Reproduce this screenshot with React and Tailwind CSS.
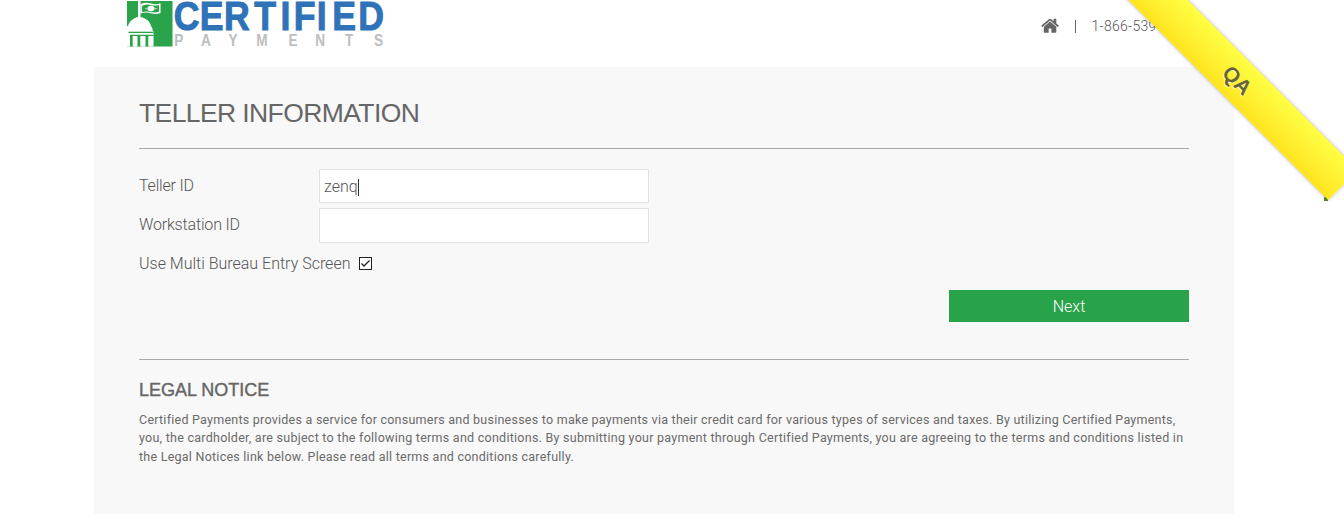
import React from "react";

function Logo() {
  return (
    <svg width="258" height="48" viewBox="0 0 258 48" role="img" aria-label="Certified Payments">
      <rect x="0" y="1" width="45.5" height="45.5" fill="#2aa44a" />
      <path d="M0 26 H1 C2.500 21 6 18.500 11 17 V1 H13.500 V17 C19 18.500 23 21 24 26 Q26 28 25.800 31 H26.500 V46.500 H0 Z" fill="#fff" />
      <rect x="1.500" y="31.700" width="25" height="1.300" fill="#2aa44a" />
      <path d="M3 34.700 H26.500 V36 H21.300 V46.500 H18.500 V36 H13.300 V46.500 H10.500 V36 H5.700 V46.500 H3 Z" fill="#2aa44a" />
      <path d="M13.500 4 Q19 1.800 24 3.500 T33.500 3.200 V13 Q29 14.800 24 13.300 T13.500 13.500 Z" fill="#fff" />
      <path d="M15 6 Q20 3.800 24 5 T32 5 V11.500 Q28 13 24 12 T15 12 Z" fill="#2aa44a" />
      <circle cx="19" cy="8.600" r="0.700" fill="#fff" />
      <circle cx="29" cy="8.600" r="0.700" fill="#fff" />
      <ellipse cx="24" cy="8.500" rx="3.600" ry="2.800" fill="#fff" />
      <g transform="scale(.88 1)" fontFamily="'Liberation Sans', sans-serif" fontWeight="700" fontSize="40.500" fill="#2e72b8" stroke="#2e72b8" strokeWidth="1">
        <text x="53 82.800 110.100 144.500 174.500 189.500 215.500 233.200 262.800" y="29.500">CERTIFIED</text>
      </g>
      <g transform="scale(.85 1)" fontFamily="'Liberation Sans', sans-serif" fontWeight="700" fontSize="16" fill="#bcbec0">
        <text x="55.500 87 119.500 152 190 221.500 256.500 290.500" y="46.500">PAYMENTS</text>
      </g>
    </svg>
  );
}

function HomeIcon() {
  return (
    <svg className="h-[19.5px] w-[19.5px]" viewBox="0 0 1792 1792" fill="#666">
      <path d="M1408 992v480q0 26-19 45t-45 19h-384v-384h-256v384h-384q-26 0-45-19t-19-45v-480q0-1 .5-3t.5-3l575-474 575 474q1 2 1 6zm223-69l-62 74q-8 9-21 11h-3q-13 0-21-7l-692-577-692 577q-12 8-24 7-13-2-21-11l-62-74q-8-10-7-23.500t11-21.500l719-599q32-26 76-26t76 26l244 204v-195q0-14 9-23t23-9h192q14 0 23 9t9 23v408l219 182q10 8 11 21.500t-7 23.500z" />
    </svg>
  );
}

function Ribbon() {
  return (
    <div className="absolute right-0 top-0 h-[220px] w-[240px] overflow-hidden">
      <div className="absolute left-[220px] top-[197px] h-[4px] w-[4px] bg-[#5e8a2e]" />
      <div className="absolute left-[-17.500px] top-[58px] flex h-[42px] w-[300px] rotate-45 items-center justify-center bg-gradient-to-b from-[#ffff44] to-[#ffe41c] pl-[2px] pt-[2px] font-['Liberation_Sans',Arial,sans-serif] text-[21px] font-bold text-[#666633] shadow-[0_0_4px_rgba(0,0,0,0.3)] [text-shadow:0_1px_1px_#fff]">
        QA
      </div>
    </div>
  );
}

function Field({ label, value, active }) {
  return (
    <div className="flex items-center">
      <label className={active ? "w-[180px] text-base tracking-[-0.2px]" : "w-[180px] pb-[2px] text-base tracking-[-0.17px]"}>{label}</label>
      <div className={active ? "flex h-[34px] w-[330px] items-center border border-[#e2e2e2] bg-white pl-[4px] pt-[2px] text-base" : "flex h-[35px] w-[330px] items-center border border-[#e2e2e2] bg-white"}>
        <span>{value}</span>
        {active && <span className="h-[17px] w-px bg-[#333]" />}
      </div>
    </div>
  );
}

export default function App() {
  return (
    <div className="relative h-[526px] overflow-hidden bg-white font-['Roboto',Arial,sans-serif] font-light text-[#555]">
      <header className="ml-[94px] flex h-[67px] w-[1140px] items-start justify-between pl-[33px]">
        <Logo />
        <div className="flex h-[52px] w-[193px] items-center whitespace-nowrap text-[14px]">
          <HomeIcon />
          <span className="ml-[14px] h-[13px] w-px bg-[#666]" />
          <span className="ml-[16px] tracking-[0.300px]">1-866-539-4117</span>
        </div>
      </header>
      <main className="ml-[94px] h-[447px] w-[1140px] bg-[#f8f8f8] px-[45px] pt-[30px]">
        <h1 className="h-[51px] font-['Liberation_Sans',Arial,sans-serif] text-[26.500px] leading-[32px] tracking-[-0.600px] text-[#666]">TELLER INFORMATION</h1>
        <hr className="mb-[20px] border-[#a9a9a9]" />
        <form className="flex flex-col">
          <Field label="Teller ID" value="zenq" active />
          <div className="h-[5px]" />
          <Field label="Workstation ID" value="" />
          <div className="mt-[8px] flex h-[24px] items-center text-base">
            <span className="w-[220px] whitespace-nowrap pt-[2px]">Use Multi Bureau Entry Screen</span>
            <svg width="13" height="13" viewBox="0 0 13 13" fill="none" stroke="#222">
              <rect x="0.5" y="0.5" width="12" height="12" fill="#fff" />
              <path d="M2.500 6.500 L5 9 L10.500 3.500" strokeWidth="1.300" />
            </svg>
          </div>
          <button type="button" className="mt-[15px] h-[32px] w-[240px] self-end bg-[#29a34a] pt-[2px] text-base text-white">Next</button>
        </form>
        <hr className="mt-[37px] border-[#a9a9a9]" />
        <h2 className="mt-[20px] h-[30px] font-['Liberation_Sans',Arial,sans-serif] text-[18px] leading-[20px] text-[#666] [-webkit-text-stroke:0.4px_#666]">LEGAL NOTICE</h2>
        <p className="flex flex-col whitespace-nowrap pt-px text-[12.500px] font-normal leading-[18.400px] text-[#6a6a6a]">
          <span className="self-start tracking-[0.245px]">Certified Payments provides a service for consumers and businesses to make payments via their credit card for various types of services and taxes. By utilizing Certified Payments,</span>
          <span className="self-start tracking-[0.260px]">you, the cardholder, are subject to the following terms and conditions. By submitting your payment through Certified Payments, you are agreeing to the terms and conditions listed in</span>
          <span className="self-start tracking-[0.245px]">the Legal Notices link below. Please read all terms and conditions carefully.</span>
        </p>
      </main>
      <Ribbon />
    </div>
  );
}
